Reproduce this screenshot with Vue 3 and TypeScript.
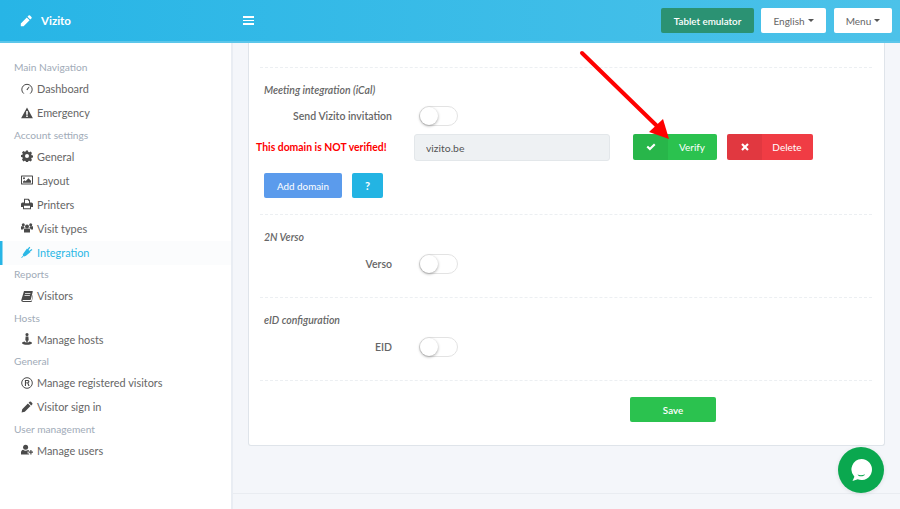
<script setup lang="ts">
type Item = { kind: 'section' | 'link'; label: string; icon?: string; active?: boolean }
const nav: Item[] = [
  { kind: 'section', label: 'Main Navigation' },
  { kind: 'link', label: 'Dashboard', icon: 'dash' },
  { kind: 'link', label: 'Emergency', icon: 'warn' },
  { kind: 'section', label: 'Account settings' },
  { kind: 'link', label: 'General', icon: 'gear' },
  { kind: 'link', label: 'Layout', icon: 'image' },
  { kind: 'link', label: 'Printers', icon: 'print' },
  { kind: 'link', label: 'Visit types', icon: 'users' },
  { kind: 'link', label: 'Integration', icon: 'plug', active: true },
  { kind: 'section', label: 'Reports' },
  { kind: 'link', label: 'Visitors', icon: 'book' },
  { kind: 'section', label: 'Hosts' },
  { kind: 'link', label: 'Manage hosts', icon: 'host' },
  { kind: 'section', label: 'General' },
  { kind: 'link', label: 'Manage registered visitors', icon: 'reg' },
  { kind: 'link', label: 'Visitor sign in', icon: 'pencil' },
  { kind: 'section', label: 'User management' },
  { kind: 'link', label: 'Manage users', icon: 'useradd' },
]
</script>

<template>
  <div class="page">
    <header class="topbar">
      <div class="brand">
        <svg class="brand-icon" viewBox="0 0 12 12"><path d="M8.6.6a1 1 0 0 1 1.400 0l1.400 1.400a1 1 0 0 1 0 1.400l-1.100 1.100L7.500 1.700zM6.800 2.400l2.800 2.800-6 6H.8V8.400z" fill="#fff"/></svg>
        <span>Vizito</span>
      </div>
      <div class="burger"><i></i><i></i><i></i></div>
      <div class="top-actions">
        <button class="tbtn tablet">Tablet emulator</button>
        <button class="tbtn light w-lang">English<b class="caret"></b></button>
        <button class="tbtn light w-menu">Menu<b class="caret"></b></button>
      </div>
    </header>

    <div class="body">
      <aside class="sidebar">
        <template v-for="item in nav" :key="item.kind + item.label">
          <div v-if="item.kind === 'section'" class="section">{{ item.label }}</div>
          <div v-else class="link" :class="{ active: item.active }">
            <svg class="ico" viewBox="0 0 12 12" fill="currentColor">
              <template v-if="item.icon === 'dash'">
                <path d="M2.800 10.600A5.200 5.200 0 1 1 9.200 10.600" fill="none" stroke="currentColor" stroke-width="1"/>
                <path d="M5.400 6.400 8 3.500l.5.400-2.100 3.300z"/>
              </template>
              <path v-else-if="item.icon === 'warn'" fill-rule="evenodd" d="M6 .6.100 11.200h11.800zM5.200 4h1.600v3.800H5.200zM5.200 8.500h1.600v1.500H5.200z"/>
              <path v-else-if="item.icon === 'gear'" fill-rule="evenodd" d="M5 .8h2l.3 1.500 1 .4 1.300-.8 1.400 1.400-.8 1.300.4 1 1.400.3v2l-1.400.3-.4 1 .8 1.300-1.400 1.400-1.300-.8-1 .4-.3 1.400H5l-.3-1.400-1-.4-1.300.8L1 10l.8-1.300-.4-1L0 7.400v-2l1.400-.3.4-1L1 2.800l1.400-1.400 1.300.8 1-.4zM6 4.400a2 2 0 1 0 0 4 2 2 0 0 0 0-4z" transform="translate(0 -.4)"/>
              <path v-else-if="item.icon === 'image'" fill-rule="evenodd" d="M.6 1.400h10.800a.6.6 0 0 1 .6.6v8a.6.6 0 0 1-.6.6H.6A.6.6 0 0 1 0 10V2a.6.6 0 0 1 .6-.6zM1 2.400v7.200h10V2.400zM2 8.800V7.600l1.600-1.400 1 1 2.800-3 2.600 2.600v2zM3 3.200a1 1 0 1 1 0 2 1 1 0 0 1 0-2z"/>
              <path v-else-if="item.icon === 'print'" fill-rule="evenodd" d="M3 .8h4.600L9 2.200V4.400h1.400A1.600 1.600 0 0 1 12 6v3h-2v2.200H2V9H0V6a1.600 1.600 0 0 1 1.600-1.600H3zM4 1.800v3.400h4V2.800H7V1.800zM3 7.800v2.400h6V7.800z"/>
              <template v-else-if="item.icon === 'users'">
                <circle cx="6" cy="4.400" r="2"/><circle cx="2.300" cy="2.800" r="1.500"/><circle cx="9.700" cy="2.800" r="1.500"/>
                <path d="M3 7.400c0-.8.6-.9 1.200-.9h3.600c.6 0 1.200.1 1.200.9v3.100H3zM0 4.800c0-.4.5-.5 1-.5h1.900c.1.8.4 1.200.9 1.600-.9.1-1.600.7-1.600 1.600H0zM12 4.800c0-.4-.5-.5-1-.5H9.100c-.1.8-.4 1.200-.9 1.600.9.1 1.600.7 1.600 1.600H12z"/>
              </template>
              <path v-else-if="item.icon === 'plug'" d="M.2 11.400l2-2-.5-.6.8-1.600L6 2.600l3.600 3.500L5 9.800 3.400 10.400l-.6-.5-2 2zM6.600 3.100 8.300.7l1 .8L7.600 3.900zM8.200 4.700 10.600 2.900l.8 1-2.300 1.700z"/>
              <path v-else-if="item.icon === 'book'" d="M3 1h8.400l.4.5L9.800 9.400 9.300 10H2.200c-.5 0-.8.3-.8.6s.3.500.8.500h8l.4-.4 1.200-5.600.4.300-1.400 6.100-.6.500H2.200C.9 12 .1 11.200.3 10zM4 3.200v.8h5.300l.2-.8zM3.500 5v.8h5.300L9 5z"/>
              <path v-else-if="item.icon === 'host'" d="M6 0a1.600 1.600 0 1 1 0 3.200A1.600 1.600 0 0 1 6 0zM4.600 3.600h2.800l.3 4H6.900L6.700 9H5.300l-.2-1.400h-.8zM1 10c0-.8 1.300-1.300 3-1.500v.8h4v-.8c1.700.2 3 .7 3 1.500 0 1-2.200 1.800-5 1.800S1 11 1 10z"/>
              <template v-else-if="item.icon === 'reg'">
                <circle cx="6" cy="6" r="5.300" fill="none" stroke="currentColor" stroke-width="1"/>
                <path fill-rule="evenodd" d="M3.900 2.900h2.500c1.200 0 2 .7 2 1.700 0 .8-.4 1.300-1 1.500l1.200 3H7.400L6.300 6.300H5v2.800H3.900zM5 3.900v1.500h1.300c.6 0 1-.3 1-.8s-.4-.7-1-.7z"/>
              </template>
              <path v-else-if="item.icon === 'pencil'" d="M8.600.8a1 1 0 0 1 1.400 0l1.200 1.200a1 1 0 0 1 0 1.400l-1 1L7.600 1.800zM6.900 2.500l2.600 2.600-5.700 5.700-3.200.6.600-3.200z"/>
              <template v-else-if="item.icon === 'useradd'">
                <circle cx="4.600" cy="3.300" r="2.500"/>
                <path d="M0 10.500V8.600C0 7 .9 6 2.100 5.800c.7.600 1.500.9 2.500.9s1.800-.3 2.400-.8c.4.100.8.300 1.100.6v1.100H6.600v2h1.500v.9zM9.300 5.900h1.200v1.700H12v1.200h-1.500v1.700H9.300V8.800H7.600V7.600h1.700z"/>
              </template>
            </svg>
            <span>{{ item.label }}</span>
          </div>
        </template>
      </aside>

      <main class="main">
        <div class="card">
          <div class="sec sec-top"></div>

          <div class="sec sec-meeting">
            <h4>Meeting integration (iCal)</h4>
            <div class="row">
              <label class="lbl">Send Vizito invitation</label>
              <span class="switch"><i></i></span>
            </div>
            <div class="domain-row">
              <span class="err">This domain is NOT verified!</span>
              <input class="domain" value="vizito.be" readonly />
              <button class="lab green"><span class="lab-ic"><svg viewBox="0 0 12 12"><path d="M.6 6.200 2.400 4.400 4.700 6.700 9.600 1.800 11.400 3.600 4.700 10.300z" fill="#fff"/></svg></span><span class="lab-tx">Verify</span></button>
              <button class="lab red"><span class="lab-ic"><svg viewBox="0 0 12 12"><path d="M1.500 3.300 3.300 1.500 6 4.200 8.700 1.500 10.500 3.300 7.800 6 10.500 8.700 8.700 10.500 6 7.800 3.300 10.500 1.500 8.700 4.200 6z" fill="#fff"/></svg></span><span class="lab-tx">Delete</span></button>
            </div>
            <div class="add-row">
              <button class="btn blue">Add domain</button>
              <button class="btn info">?</button>
            </div>
          </div>

          <div class="sec sec-simple">
            <h4>2N Verso</h4>
            <div class="row">
              <label class="lbl">Verso</label>
              <span class="switch"><i></i></span>
            </div>
          </div>

          <div class="sec sec-simple">
            <h4>eID configuration</h4>
            <div class="row">
              <label class="lbl">EID</label>
              <span class="switch"><i></i></span>
            </div>
          </div>

          <div class="save-row"><button class="btn save">Save</button></div>
        </div>
      </main>
    </div>

    <div class="foot-line"></div>

    <svg class="arrow" viewBox="0 0 900 509">
      <path d="M582 53 657 126" stroke="#fe0000" stroke-width="4" stroke-linecap="round" fill="none"/>
      <path d="M663 119 649 132 669 139z" fill="#fe0000"/>
    </svg>

    <div class="chat">
      <svg viewBox="0 0 24 24" width="24" height="24">
        <path d="M12.500 1a10.500 10.500 0 1 1-3.800 20.300L3.500 23l1.900-4.300A10.500 10.500 0 0 1 12.500 1z" fill="#fff"/>
        <path d="M8.500 16.500c2.200.9 5 .9 7.500-.2-.8 2.600-6.500 2.800-7.500.2z" fill="#0aa84f"/>
      </svg>
    </div>
  </div>
</template>

<style>
html, body { margin: 0; padding: 0; background: #f4f6fa; }
</style>

<style scoped>
.page { position: relative; width: 900px; height: 509px; overflow: hidden; background: #f4f6fa; font-family: "Lato", "Noto Sans", sans-serif; font-size: 11px; color: #666; }
.topbar { height: 41px; display: flex; align-items: center; background: linear-gradient(90deg, #27b5e6, #4cc2e9); border-bottom: 2px solid #5cc6ea; }
.brand { width: 243px; box-sizing: border-box; padding-left: 20px; display: flex; align-items: center; gap: 9px; color: #fff; font-weight: 700; font-size: 11.500px; }
.brand-icon { width: 12px; height: 12px; }
.burger { display: flex; flex-direction: column; gap: 2px; width: 11px; }
.burger i { display: block; height: 1.500px; background: #fff; }
.top-actions { margin-left: auto; display: flex; gap: 7px; padding-right: 8px; }
.tbtn { height: 25px; border: 0; border-radius: 2px; font: inherit; font-size: 10px; padding: 0; display: flex; align-items: center; justify-content: center; gap: 3px; }
.tablet { width: 93px; background: #2b9273; color: #fff; font-weight: 600; font-size: 9.800px; }
.light { background: #fff; color: #666; }
.w-lang { width: 65px; }
.w-menu { width: 58px; margin-left: 1px; }
.caret { width: 0; height: 0; border-left: 3px solid transparent; border-right: 3px solid transparent; border-top: 3px solid #555; }
.body { display: flex; }
.sidebar { width: 233px; height: 466px; box-sizing: border-box; flex: none; background: #fff; border-right: 2px solid #e9edf3; padding-top: 15px; }
.section { height: 19.500px; line-height: 19px; padding-left: 14px; color: #a1abb8; font-size: 10.200px; }
.link { height: 24px; box-sizing: border-box; padding: 0 0 1.500px 21px; display: flex; align-items: center; color: #666; font-size: 10.900px; }
.link span { margin-left: 4px; }
.ico { width: 12px; height: 12px; flex: none; color: #4a4a4a; }
.link.active { background: #fbfcfd; color: #2bb8e6; box-shadow: inset 2.500px 0 0 #27b5e6; }
.link.active .ico { color: #2bb8e6; }
.main { flex: 1; padding: 0 15px; }
.card { background: #fff; border: 1px solid #dfe4ea; border-top: 0; border-radius: 0 0 3px 3px; height: 403px; box-sizing: border-box; padding: 0 12px 0 11px; }
.sec { border-bottom: 1px dashed #eceff2; }
.sec-top { height: 24px; }
.sec-meeting { height: 147px; box-sizing: border-box; padding-top: 15px; }
.sec-simple { height: 83px; box-sizing: border-box; padding-top: 15px; }
.sec-simple .row { margin-top: 10px; }
h4 { margin: 0 0 9px 4px; height: 14px; line-height: 14px; font-size: 10.500px; font-style: italic; font-weight: 600; color: #666; }
.row { display: flex; align-items: center; height: 20px; }
.lbl { width: 132px; text-align: right; font-size: 10.500px; font-weight: 600; color: #666; flex: none; }
.switch { margin-left: 27px; width: 39px; height: 20px; box-sizing: border-box; border: 1px solid #e3e3e3; border-radius: 10px; background: #fff; position: relative; display: block; }
.switch i { position: absolute; left: 0; top: 0; width: 18px; height: 18px; border-radius: 50%; background: #fff; box-shadow: 0 1px 3px rgba(0,0,0,.35); }
.domain-row { display: flex; align-items: flex-start; margin-top: 8px; margin-left: -4px; }
.err { width: 158px; color: #fe0000; font-size: 10.400px; font-weight: 700; line-height: 26px; flex: none; }
.domain { width: 196px; height: 27px; box-sizing: border-box; border: 1px solid #e3e7ea; border-radius: 3px; background: #eef1f3; padding: 0 11px; font: inherit; font-size: 10.400px; color: #555; outline: none; }
.lab { height: 26px; border: 0; padding: 0; border-radius: 2px; display: flex; color: #fff; font: inherit; font-size: 10px; overflow: hidden; }
.lab.green { width: 84px; margin-left: 23px; background: #2bc24f; }
.lab.red { width: 86px; margin-left: 10px; background: #f03c44; }
.lab-ic { width: 35px; display: flex; align-items: center; justify-content: center; background: rgba(0,0,0,.06); }
.lab-ic svg { width: 10px; height: 10px; }
.lab-tx { flex: 1; line-height: 26px; text-align: center; padding-right: 1px; }
.add-row { display: flex; gap: 10px; margin-top: 12px; margin-left: 4px; }
.btn { height: 25px; border: 0; border-radius: 2px; color: #fff; font: inherit; font-size: 9.800px; padding: 0; }
.blue { width: 78px; background: #5b9bec; }
.info { width: 31px; background: #23b4e3; font-weight: 700; font-size: 11px; }
.save-row { display: flex; justify-content: flex-end; padding: 16px 156px 0 0; }
.save { width: 86px; background: #2bc24f; font-weight: 600; }
.foot-line { position: absolute; left: 233px; right: 0; top: 493px; height: 1px; background: #e9ecf1; }
.arrow { position: absolute; inset: 0; width: 900px; height: 509px; pointer-events: none; }
.chat { position: absolute; left: 838px; top: 447px; width: 46px; height: 46px; border-radius: 50%; background: #0aa84f; display: flex; align-items: center; justify-content: center; box-shadow: 0 1px 4px rgba(0,0,0,.1); }
</style>
